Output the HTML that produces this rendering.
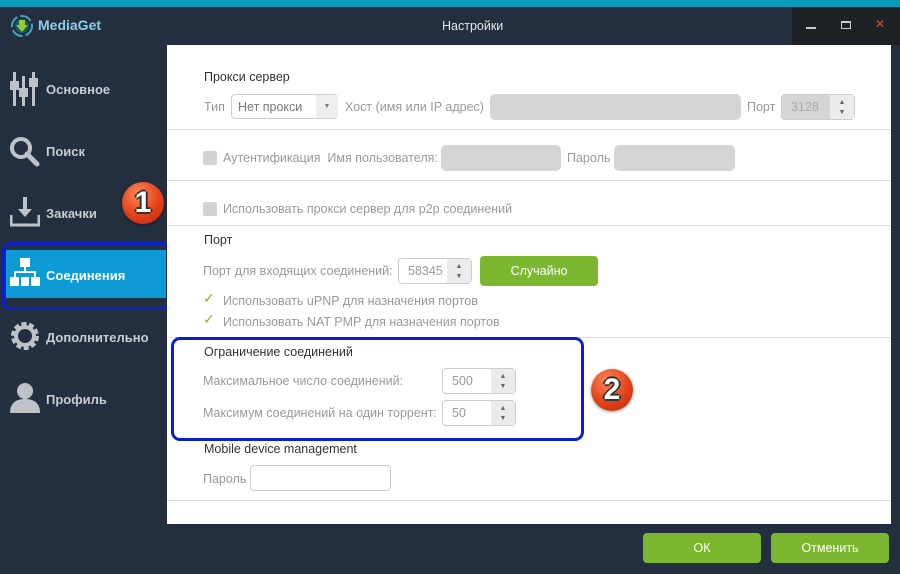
<!DOCTYPE html>
<html><head><meta charset="utf-8"><style>
*{margin:0;padding:0;box-sizing:border-box}
body{width:900px;height:574px;background:#232f3f;font-family:"Liberation Sans",sans-serif;position:relative;overflow:hidden}
.a{position:absolute}
.top{left:0;top:0;width:900px;height:7px;background:#0b9bbd}
.ctrl{left:792px;top:7px;width:108px;height:38px;background:#1e2126}
.panel{left:167px;top:45px;width:724px;height:479px;background:#fff}
.nav{left:46px;font-weight:bold;font-size:13px;color:#c9ccd1;font-family:"Liberation Sans",sans-serif}
.t{font-size:12.5px;color:#333;white-space:nowrap}
.g{font-size:12.5px;color:#999;white-space:nowrap}
.hr{left:167px;width:724px;height:1px;background:#ddd}
.in{border:1px solid #ccc;border-radius:4px;background:#fff}
.dis{background:#d5d5d5;border-radius:5px}
.cb{width:14px;height:14px;background:#d3d3d3;border-radius:2px}
.spin{border:1px solid #ccc;border-radius:4px;background:#fff;font-size:12.5px;color:#999;padding:5px 0 0 9px}
.spin b{position:absolute;right:0;top:0;width:24px;height:100%;background:#ebebeb;font-size:7px;color:#666;text-align:center;line-height:10px;padding-top:3px;font-weight:normal}
.btn{background:#7cb82f;color:#fff;font-size:12.5px;text-align:center;border-radius:4px}
.badge{width:42px;height:42px;border-radius:50%;background:radial-gradient(circle at 40% 30%,#ff8a5a,#e3401a 55%,#b52a0c);color:#fff;font:bold 30px "Liberation Sans",sans-serif;text-align:center;line-height:42px;text-shadow:-2px 0 #333,2px 0 #333,0 -2px #333,0 2px #333;box-shadow:0 1px 3px rgba(0,0,0,.4)}
.ck{color:#7ab72f;font-size:14px;font-weight:bold;font-family:"DejaVu Sans",sans-serif}
</style></head><body>
<div class="a top"></div>
<div class="a ctrl"></div>
<div class="a" style="left:806px;top:27px;width:10px;height:2px;background:#ccc"></div>
<div class="a" style="left:841px;top:21px;width:10px;height:8px;border:1px solid #ccc;border-top-width:2px"></div>
<div class="a" style="left:875px;top:17px;color:#d0552f;font-size:12px">✕</div>
<svg class="a" style="left:10px;top:14px" width="24" height="24" viewBox="0 0 24 24"><circle cx="12" cy="12" r="10" fill="none" stroke="#3fa7c5" stroke-width="2" stroke-dasharray="12 3"/><circle cx="12" cy="12" r="7" fill="#1f5660"/><path d="M9 6h6v5h3l-6 7-6-7h3z" fill="#8ccf2f"/></svg>
<div class="a" style="left:38px;top:17px;color:#8ecfe6;font:bold 14px 'Liberation Sans',sans-serif">MediaGet</div>
<div class="a" style="left:442px;top:19px;color:#e6e6e6;font-size:12.5px">Настройки</div>

<svg class="a" style="left:9px;top:72px" width="30" height="34"><g fill="#bfc3c8"><rect x="4" y="0" width="3" height="34"/><rect x="13" y="4" width="3" height="30"/><rect x="23" y="0" width="3" height="34"/><rect x="1" y="9" width="9" height="9"/><rect x="10" y="16" width="9" height="9"/><rect x="20" y="6" width="9" height="9"/></g></svg>
<div class="a nav" style="top:82px">Основное</div>
<svg class="a" style="left:9px;top:136px" width="32" height="32"><circle cx="12" cy="12" r="9" fill="none" stroke="#bfc3c8" stroke-width="4"/><path d="M18 18l10 10" stroke="#bfc3c8" stroke-width="5" stroke-linecap="round"/></svg>
<div class="a nav" style="top:144px">Поиск</div>
<svg class="a" style="left:10px;top:197px" width="30" height="30"><path d="M13 0h4v12h5l-7 8-7-8h5z" fill="#bfc3c8"/><path d="M1 18v10h28v-10" fill="none" stroke="#bfc3c8" stroke-width="3"/></svg>
<div class="a nav" style="top:206px">Закачки</div>
<div class="a" style="left:2px;top:242px;width:168px;height:68px;border:3px solid #0b1ec8;border-radius:8px;background:#243040"></div>
<div class="a" style="left:6px;top:250px;width:160px;height:48px;background:#0e9ad4"></div>
<svg class="a" style="left:10px;top:258px" width="30" height="30"><g fill="#fff"><rect x="10" y="0" width="10" height="9"/><rect x="0" y="19" width="9" height="9"/><rect x="11" y="19" width="8" height="9"/><rect x="21" y="19" width="9" height="9"/><rect x="14" y="9" width="2" height="5"/><rect x="4" y="13" width="22" height="2"/><rect x="4" y="13" width="2" height="6"/><rect x="24" y="13" width="2" height="6"/></g></svg>
<div class="a nav" style="top:268px;color:#fff">Соединения</div>
<svg class="a" style="left:9px;top:320px" width="32" height="32"><circle cx="16" cy="16" r="11" fill="none" stroke="#bfc3c8" stroke-width="6" stroke-dasharray="4.5 2.4"/><circle cx="16" cy="16" r="9" fill="none" stroke="#bfc3c8" stroke-width="4"/></svg>
<div class="a nav" style="top:330px">Дополнительно</div>
<svg class="a" style="left:9px;top:382px" width="32" height="32"><circle cx="16" cy="9" r="8" fill="#bfc3c8"/><path d="M1 31c0-10 6-14 15-14s15 4 15 14z" fill="#bfc3c8"/></svg>
<div class="a nav" style="top:392px">Профиль</div>

<div class="a panel"></div>
<div class="a badge" style="left:122px;top:182px">1</div>

<div class="a t" style="left:204px;top:70px">Прокси сервер</div>
<div class="a g" style="left:204px;top:100px">Тип</div>
<div class="a in" style="left:231px;top:94px;width:107px;height:25px"><span class="g" style="position:absolute;left:6px;top:5px;color:#777">Нет прокси</span><span style="position:absolute;left:84px;top:0;width:22px;height:23px;background:#eee;font-size:7px;color:#777;text-align:center;line-height:23px">▼</span></div>
<div class="a g" style="left:345px;top:100px">Хост (имя или IP адрес)</div>
<div class="a dis" style="left:490px;top:94px;width:251px;height:26px"></div>
<div class="a g" style="left:747px;top:100px">Порт</div>
<div class="a spin" style="left:781px;top:94px;width:74px;height:26px;background:#d5d5d5;color:#aaa">3128<b>▲<br>▼</b></div>
<div class="a hr" style="top:129px"></div>
<div class="a cb" style="left:203px;top:151px"></div>
<div class="a g" style="left:223px;top:151px">Аутентификация&nbsp; Имя пользователя:</div>
<div class="a dis" style="left:441px;top:145px;width:120px;height:26px"></div>
<div class="a g" style="left:567px;top:151px">Пароль</div>
<div class="a dis" style="left:614px;top:145px;width:121px;height:26px"></div>
<div class="a hr" style="top:180px"></div>
<div class="a cb" style="left:203px;top:202px"></div>
<div class="a g" style="left:223px;top:202px">Использовать прокси сервер для p2p соединений</div>
<div class="a hr" style="top:225px"></div>
<div class="a t" style="left:204px;top:233px">Порт</div>
<div class="a g" style="left:203px;top:264px">Порт для входящих соединений:</div>
<div class="a spin" style="left:398px;top:258px;width:74px;height:26px">58345<b>▲<br>▼</b></div>
<div class="a btn" style="left:480px;top:256px;width:118px;height:30px;line-height:30px">Случайно</div>
<div class="a ck" style="left:203px;top:291px">✓</div>
<div class="a g" style="left:223px;top:294px">Использовать uPNP для назначения портов</div>
<div class="a ck" style="left:203px;top:312px">✓</div>
<div class="a g" style="left:223px;top:315px">Использовать NAT PMP для назначения портов</div>
<div class="a hr" style="top:337px"></div>

<div class="a" style="left:171px;top:337px;width:413px;height:104px;border:3px solid #0b1ec8;border-radius:9px"></div>
<div class="a t" style="left:204px;top:345px">Ограничение соединений</div>
<div class="a g" style="left:203px;top:374px">Максимальное число соединений:</div>
<div class="a spin" style="left:442px;top:368px;width:74px;height:26px">500<b>▲<br>▼</b></div>
<div class="a g" style="left:203px;top:406px">Максимум соединений на один торрент:</div>
<div class="a spin" style="left:442px;top:400px;width:74px;height:26px">50<b>▲<br>▼</b></div>
<div class="a badge" style="left:591px;top:369px">2</div>

<div class="a t" style="left:204px;top:442px">Mobile device management</div>
<div class="a g" style="left:203px;top:472px">Пароль</div>
<div class="a in" style="left:250px;top:465px;width:141px;height:26px"></div>
<div class="a hr" style="top:500px"></div>

<div class="a btn" style="left:643px;top:533px;width:118px;height:30px;line-height:30px">ОК</div>
<div class="a btn" style="left:771px;top:533px;width:118px;height:30px;line-height:30px">Отменить</div>
</body></html>
